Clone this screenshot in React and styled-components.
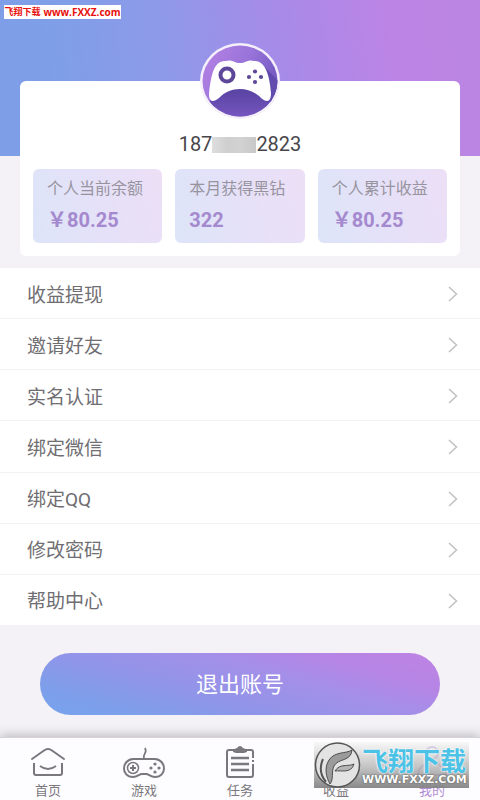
import React from "react";
import styled, { createGlobalStyle } from "styled-components";

const GlobalStyle = createGlobalStyle`
  * { box-sizing: border-box; }
  body {
    margin: 0;
    background: #f4f2f6;
    font-family: Roboto, "Noto Sans CJK SC", sans-serif;
  }
  button { font-family: inherit; }
`;

const Page = styled.div`
  position: relative;
  display: flex;
  flex-direction: column;
  min-height: 100vh;
`;

const Banner = styled.header`
  height: 156px;
  padding: 5px 4px;
  background: linear-gradient(82deg, #7e9fe8 12%, #8c9ae9 34%, #a88ae8 60%, #bc84e5 82%, #ba85e2 100%);
`;

const SiteTag = styled.a`
  display: flex;
  align-items: center;
  justify-content: center;
  gap: 3px;
  width: 117px;
  height: 14px;
  background: #fff;
  color: #e8100c;
  font: bold 10px/14px "Open Sans", "Noto Sans CJK SC", sans-serif;
  text-decoration: none;
  white-space: nowrap;
`;

const SiteTagName = styled.span`
  font-size: 9px;
`;

const ProfileCard = styled.section`
  display: flex;
  flex-direction: column;
  align-items: center;
  margin: -75px 20px 0;
  padding: 0 13px 13px;
  border-radius: 6px;
  background: #fff;
`;

const Avatar = styled.svg`
  width: 80px;
  height: 76px;
  margin-top: -38px;
`;

const Phone = styled.div`
  display: flex;
  align-items: center;
  margin: 13px 0 12px;
  color: #48464b;
  font-size: 20px;
  line-height: 25px;
`;

const Mask = styled.span`
  width: 44px;
  height: 16px;
  background: linear-gradient(90deg, #dedede, #cfcfcf 35%, #d2d2d2 65%, #c8c8c8);
`;

const Stats = styled.dl`
  display: grid;
  grid-template-columns: repeat(3, 1fr);
  gap: 13px;
  width: 100%;
  margin: 0;
`;

const Stat = styled.div`
  padding: 8px 0 11px 14px;
  border-radius: 6px;
  background: linear-gradient(75deg, #dde5f8 0%, #e5e1f8 50%, #ecdff6 100%);
`;

const StatLabel = styled.dt`
  color: #98949f;
  font-size: 16px;
  line-height: 24px;
  white-space: nowrap;
`;

const StatValue = styled.dd`
  margin: 8px 0 0;
  color: #a589cf;
  font-size: 20px;
  font-weight: 700;
  line-height: 23px;
`;

const Menu = styled.nav`
  display: flex;
  flex-direction: column;
  min-height: 358px;
  margin-top: 12px;
  background: #fff;
`;

const MenuRow = styled.a`
  display: flex;
  flex: 1;
  align-items: center;
  justify-content: space-between;
  padding: 2px 21px 0 27px;
  border-bottom: 1px solid #f3f1f5;
  color: #706e72;
  font-size: 19px;
  line-height: 28px;
  text-decoration: none;
`;

const MenuLabel = styled.span`
  padding-top: 3px;
`;

const Chevron = styled.svg`
  width: 12px;
  height: 16px;
  fill: none;
  stroke: #c4c2c5;
  stroke-width: 1.6;
`;

const LogoutButton = styled.button`
  height: 62px;
  margin: 27px 40px 0;
  padding: 2px 0 0;
  border: 0;
  border-radius: 31px;
  background: linear-gradient(16deg, #7aa1ec 8%, #7f9eea 18%, #9095e9 37%, #a48fe8 62%, #b585e5 78%, #be83e3 100%);
  color: #fff;
  font-size: 22px;
  line-height: 32px;
`;

const TabBar = styled.nav`
  position: relative;
  display: grid;
  grid-template-columns: repeat(5, 1fr);
  height: 63px;
  margin-top: auto;
  border-top: 1px solid #d5d3d7;
  background: #fdfcfe;
  box-shadow: 0 -2px 10px rgba(60, 50, 70, 0.3);
`;

const Tab = styled.a`
  display: flex;
  flex-direction: column;
  align-items: center;
  padding-top: 7px;
  color: ${(p) => (p.$active ? "#b38dd5" : "#7b787d")};
  font-size: 13px;
  line-height: 19px;
  text-decoration: none;
`;

const TabIcon = styled.svg`
  width: 46px;
  height: 36px;
  fill: none;
  stroke: currentColor;
  stroke-width: 2;
`;

const Watermark = styled.aside`
  position: absolute;
  top: 4px;
  right: 11px;
  display: flex;
  width: 155px;
  height: 46px;
  background: linear-gradient(rgba(245, 245, 245, 0.65), rgba(185, 185, 185, 0.85) 55%, rgba(125, 125, 125, 0.9));
`;

const WatermarkLogo = styled.svg`
  flex: none;
  width: 48px;
  height: 46px;
`;

const WatermarkText = styled.div`
  display: flex;
  flex-direction: column;
  padding-top: 3px;
  white-space: nowrap;
`;

const WatermarkName = styled.strong`
  color: #4cc3e6;
  font: 700 26px/29px "Noto Sans CJK SC", sans-serif;
  text-shadow: 0 0 2px #fff, 0 0 2px #fff;
`;

const WatermarkSite = styled.span`
  color: #fff;
  font: bold 11px/12px "DejaVu Sans", sans-serif;
  text-shadow: 0 0 2px #555, 0 0 1px #666;
`;

const menuItems = ["收益提现", "邀请好友", "实名认证", "绑定微信", "绑定QQ", "修改密码", "帮助中心"];

const stats = [
  { label: "个人当前余额", value: "￥80.25" },
  { label: "本月获得黑钻", value: "322" },
  { label: "个人累计收益", value: "￥80.25" },
];

const tabs = [
  {
    label: "首页",
    icon: (
      <>
        <path d="M7 14 19 5.500Q23 2.500 27 5.500L39 14" strokeLinecap="round" />
        <path d="M9 18V28Q9 30 11 30H35Q37 30 37 28V18" />
        <path d="M15 21Q23 27 31 21" strokeWidth="1.800" />
      </>
    ),
  },
  {
    label: "游戏",
    icon: (
      <>
        <path d="M23 14C21 8 27 9 24 3" strokeWidth="1.700" />
        <path d="M12 14H34C46 15 46 32 34 32C29 32 28 29 25 29H21C18 29 17 32 12 32C0 32 0 15 12 14Z" />
        <circle cx="12" cy="23" r="5.500" strokeWidth="1.500" />
        <path d="M9 23H15M12 20V26" />
        <g fill="currentColor" stroke="none">
          <circle cx="34" cy="19" r="1.600" />
          <circle cx="34" cy="27" r="1.600" />
          <circle cx="30" cy="23" r="1.600" />
          <circle cx="38" cy="23" r="1.600" />
        </g>
      </>
    ),
  },
  {
    label: "任务",
    icon: (
      <>
        <path d="M36 13V7Q36 5 34 5H12Q10 5 10 7V30Q10 32 12 32H34Q36 32 36 30V19M36 15V17" />
        <path d="M16 7V4.500L20 3Q23-1 26 3L30 4.500V7L27 8H19Z" fill="currentColor" stroke="none" />
        <path d="M14 13H32M14 19H32M14 25H32" strokeWidth="2.300" />
      </>
    ),
  },
  {
    label: "收益",
    icon: (
      <>
        <rect x="11" y="4" width="25" height="27" rx="4" />
        <path d="M17 9 23 16 29 9M23 16V26M17 17H29M17 21H29" />
      </>
    ),
  },
  {
    label: "我的",
    active: true,
    icon: (
      <>
        <circle cx="23" cy="8" r="6" />
        <path d="M9 30Q8 23 19 18H27Q38 23 37 30Z" />
      </>
    ),
  },
];

function GamepadAvatar() {
  return (
    <Avatar viewBox="0 0 80 76" role="img" aria-label="头像">
      <defs>
        <linearGradient id="disc" x1="0" y1="0.200" x2="1" y2="0.700">
          <stop offset="0" stopColor="#b681e4" />
          <stop offset="0.500" stopColor="#9773d9" />
          <stop offset="1" stopColor="#6650b8" />
        </linearGradient>
        <linearGradient id="shade" x1="0" y1="0" x2="0" y2="1">
          <stop offset="0" stopColor="#5843a2" />
          <stop offset="1" stopColor="#7857c1" />
        </linearGradient>
        <clipPath id="discClip">
          <ellipse cx="40" cy="38" rx="37.500" ry="35.500" />
        </clipPath>
      </defs>
      <ellipse cx="40" cy="38" rx="40" ry="38" fill="#f5effc" />
      <g clipPath="url(#discClip)">
        <rect width="80" height="76" fill="url(#disc)" />
        <path d="M10 57 27 46H57L80 60V76H10Z" fill="url(#shade)" />
        <path d="M65 24 80 40V62L70 57Z" fill="#624baf" />
      </g>
      <path d="M26 18C32 16 34 20 40 20S48 16 54 18C66 17 70 35 71 50C71 59 67 60 61 55C50 43 30 43 19 55C13 60 9 59 9 51C11 32 14 17 26 18Z" fill="#fff" />
      <circle cx="27" cy="32" r="6.500" fill="#fff" stroke="#5d4799" strokeWidth="4" />
      <g fill="#5d4799">
        <circle cx="55" cy="28.500" r="2.100" />
        <circle cx="55" cy="39" r="2.100" />
        <circle cx="49" cy="34" r="2.100" />
        <circle cx="61" cy="34" r="2.100" />
      </g>
    </Avatar>
  );
}

export default function App() {
  return (
    <>
      <GlobalStyle />
      <Page>
        <Banner>
          <SiteTag href="#site">
            <SiteTagName>飞翔下载</SiteTagName>
            <span>www.FXXZ.com</span>
          </SiteTag>
        </Banner>
        <ProfileCard>
          <GamepadAvatar />
          <Phone>
            <span>187</span>
            <Mask />
            <span>2823</span>
          </Phone>
          <Stats>
            {stats.map((s) => (
              <Stat key={s.label}>
                <StatLabel>{s.label}</StatLabel>
                <StatValue>{s.value}</StatValue>
              </Stat>
            ))}
          </Stats>
        </ProfileCard>
        <Menu>
          {menuItems.map((item) => (
            <MenuRow href="#menu" key={item}>
              <MenuLabel>{item}</MenuLabel>
              <Chevron viewBox="0 0 12 16" aria-hidden="true">
                <path d="M2 1 9.500 8 2 15" />
              </Chevron>
            </MenuRow>
          ))}
        </Menu>
        <LogoutButton type="button">退出账号</LogoutButton>
        <TabBar>
          {tabs.map((t) => (
            <Tab href="#tab" key={t.label} $active={t.active}>
              <TabIcon viewBox="0 0 46 36" aria-hidden="true">{t.icon}</TabIcon>
              {t.label}
            </Tab>
          ))}
          <Watermark>
            <WatermarkLogo viewBox="0 0 48 46" aria-hidden="true">
              <circle cx="23.500" cy="23" r="22" fill="#e3e3e3" stroke="#555" strokeWidth="1.500" />
              <path d="M38 8C32 12 21 9 15 18C10 26 12 35 16 42C20 37 17 30 20 24C24 16 37 20 38 8Z" fill="#9b9b9b" stroke="#4d4d4d" />
              <path d="M40 22C34 25 26 21 21 29C27 28 37 32 40 22Z" fill="#b5b5b5" stroke="#4d4d4d" />
              <path d="M9 17C5 26 7 34 12 40" fill="none" stroke="#555" strokeWidth="2" />
            </WatermarkLogo>
            <WatermarkText>
              <WatermarkName>飞翔下载</WatermarkName>
              <WatermarkSite>WWW.FXXZ.COM</WatermarkSite>
            </WatermarkText>
          </Watermark>
        </TabBar>
      </Page>
    </>
  );
}
